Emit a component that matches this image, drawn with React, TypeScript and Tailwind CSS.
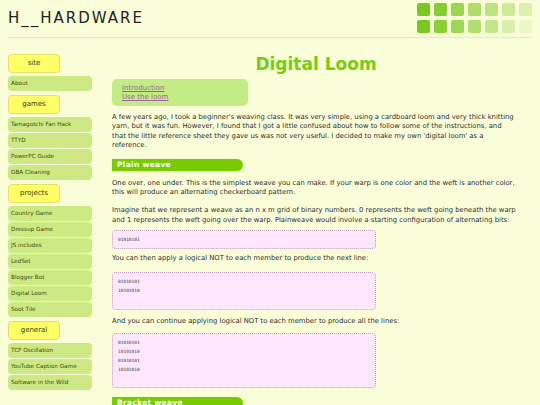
const groups = [
  { title: "site", items: ["About"] },
  { title: "games", items: ["Tamagotchi Fan Hack", "TTYD", "PowerPC Guide", "GBA Cleaning"] },
  {
    title: "projects",
    items: ["Country Game", "Dressup Game", "JS includes", "LedSet", "Blogger Bot", "Digital Loom", "Soot Tile"],
  },
  { title: "general", items: ["TCP Oscillation", "YouTube Caption Game", "Software in the Wild"] },
];

// logo squares fade out to the right
const squareRows = [
  [
    "bg-[#78c91e]",
    "bg-[#78c91e]/90",
    "bg-[#78c91e]/75",
    "bg-[#78c91e]/60",
    "bg-[#78c91e]/48",
    "bg-[#78c91e]/35",
    "bg-[#78c91e]/22",
  ],
  [
    "bg-[#78c91e]",
    "bg-[#78c91e]/88",
    "bg-[#78c91e]/72",
    "bg-[#78c91e]/58",
    "bg-[#78c91e]/42",
    "bg-[#78c91e]/26",
    "bg-[#78c91e]/10",
  ],
];

function SectionBar({ children, className = "" }: { children: string; className?: string }) {
  return (
    <div
      className={`w-[131px] h-[12px] bg-[#77cc00] rounded-l-[3px] rounded-r-full pl-[5px] text-white font-bold text-[7.5px] leading-[12px] tracking-[0.3px] ${className}`}
    >
      {children}
    </div>
  );
}

function Pre({ lines, className = "" }: { lines: string[]; className?: string }) {
  return (
    <pre
      className={`w-[264px] bg-[#ffe8ff] border border-dotted border-[#c49ac4] rounded-[4px] pl-[5px] pt-[4px] pb-[4px] text-[4.5px] leading-[9px] text-[#333] ${className}`}
      style={{ fontFamily: '"DejaVu Sans Mono", "Liberation Mono", monospace' }}
    >
      {lines.join("\n")}
    </pre>
  );
}

export default function App() {
  return (
    <div
      className="min-h-screen bg-[#f9fdd8] text-[#2e2e2e]"
      style={{ fontFamily: '"DejaVu Sans", Verdana, sans-serif' }}
    >
      <header className="ml-[8px] mr-[8px] h-[38px] border-b border-[#e3eeb2] flex justify-between">
        <div className="pt-[9px] text-[15px] leading-[18px] tracking-[2px] text-[#222]">H__HARDWARE</div>
        <div className="pt-[3px] flex flex-col gap-[4px]">
          {squareRows.map((row, i) => (
            <div key={i} className="flex gap-[4px]">
              {row.map((c, j) => (
                <div key={j} className={`w-[13px] h-[13px] rounded-[2px] ${c}`} />
              ))}
            </div>
          ))}
        </div>
      </header>

      <div className="flex pt-[16px] pl-[8px] gap-[20px]">
        <nav className="w-[84px] shrink-0">
          {groups.map((g) => (
            <div key={g.title} className="mb-[4px]">
              <div className="w-[52px] h-[19px] mb-[3px] bg-[#ffff66] border border-[#e2e26a] rounded-[4px] flex items-center justify-center text-[7px] text-[#3a3a10]">
                {g.title}
              </div>
              {g.items.map((it) => (
                <div
                  key={it}
                  className="h-[15px] mb-[1px] bg-[#cde983] rounded-[4px] pl-[3px] flex items-center text-[5.7px] text-[#3d4a0c] whitespace-nowrap"
                >
                  {it}
                </div>
              ))}
            </div>
          ))}
        </nav>

        <main className="w-[408px] text-[6.8px] leading-[9.4px]">
          <h1 className="text-center text-[17px] leading-[20px] font-bold text-[#77cc11]">Digital Loom</h1>

          <div className="mt-[5px] w-[136px] h-[27px] bg-[#c3ec85] rounded-[5px] pl-[10px] pt-[5px] text-[7px] leading-[9.4px]">
            <a href="#intro" className="block w-fit text-[#a25fa2] underline">
              Introduction
            </a>
            <a href="#loom" className="block w-fit text-[#a25fa2] underline">
              Use the loom
            </a>
          </div>

          <p className="mt-[7px]">
            A few years ago, I took a beginner's weaving class. It was very simple, using a cardboard loom and very
            thick knitting yarn, but it was fun. However, I found that I got a little confused about how to follow
            some of the instructions, and
            <br />
            that the little reference sheet they gave us was not very useful. I decided to make my own 'digital loom'
            as a
            <br />
            reference.
          </p>

          <SectionBar className="mt-[8px]">Plain weave</SectionBar>

          <p className="mt-[8px]">
            One over, one under. This is the simplest weave you can make. If your warp is one color and the weft is
            another color, this will produce an alternating checkerboard pattern.
          </p>
          <p className="mt-[9px]">
            Imagine that we represent a weave as an n x m grid of binary numbers. 0 represents the weft going beneath
            the warp and 1 represents the weft going over the warp. Plainweave would involve a starting configuration
            of alternating bits:
          </p>

          <Pre className="mt-[5px]" lines={["01010101"]} />

          <p className="mt-[5px]">You can then apply a logical NOT to each member to produce the next line:</p>

          <Pre className="mt-[8px] pb-[5px]" lines={["01010101", "10101010", " "]} />

          <p className="mt-[7px]">
            And you can continue applying logical NOT to each member to produce all the lines:
          </p>

          <Pre className="mt-[7px]" lines={["01010101", "10101010", "01010101", "10101010", " "]} />

          <SectionBar className="mt-[9px]">Bracket weave</SectionBar>
        </main>
      </div>
    </div>
  );
}
